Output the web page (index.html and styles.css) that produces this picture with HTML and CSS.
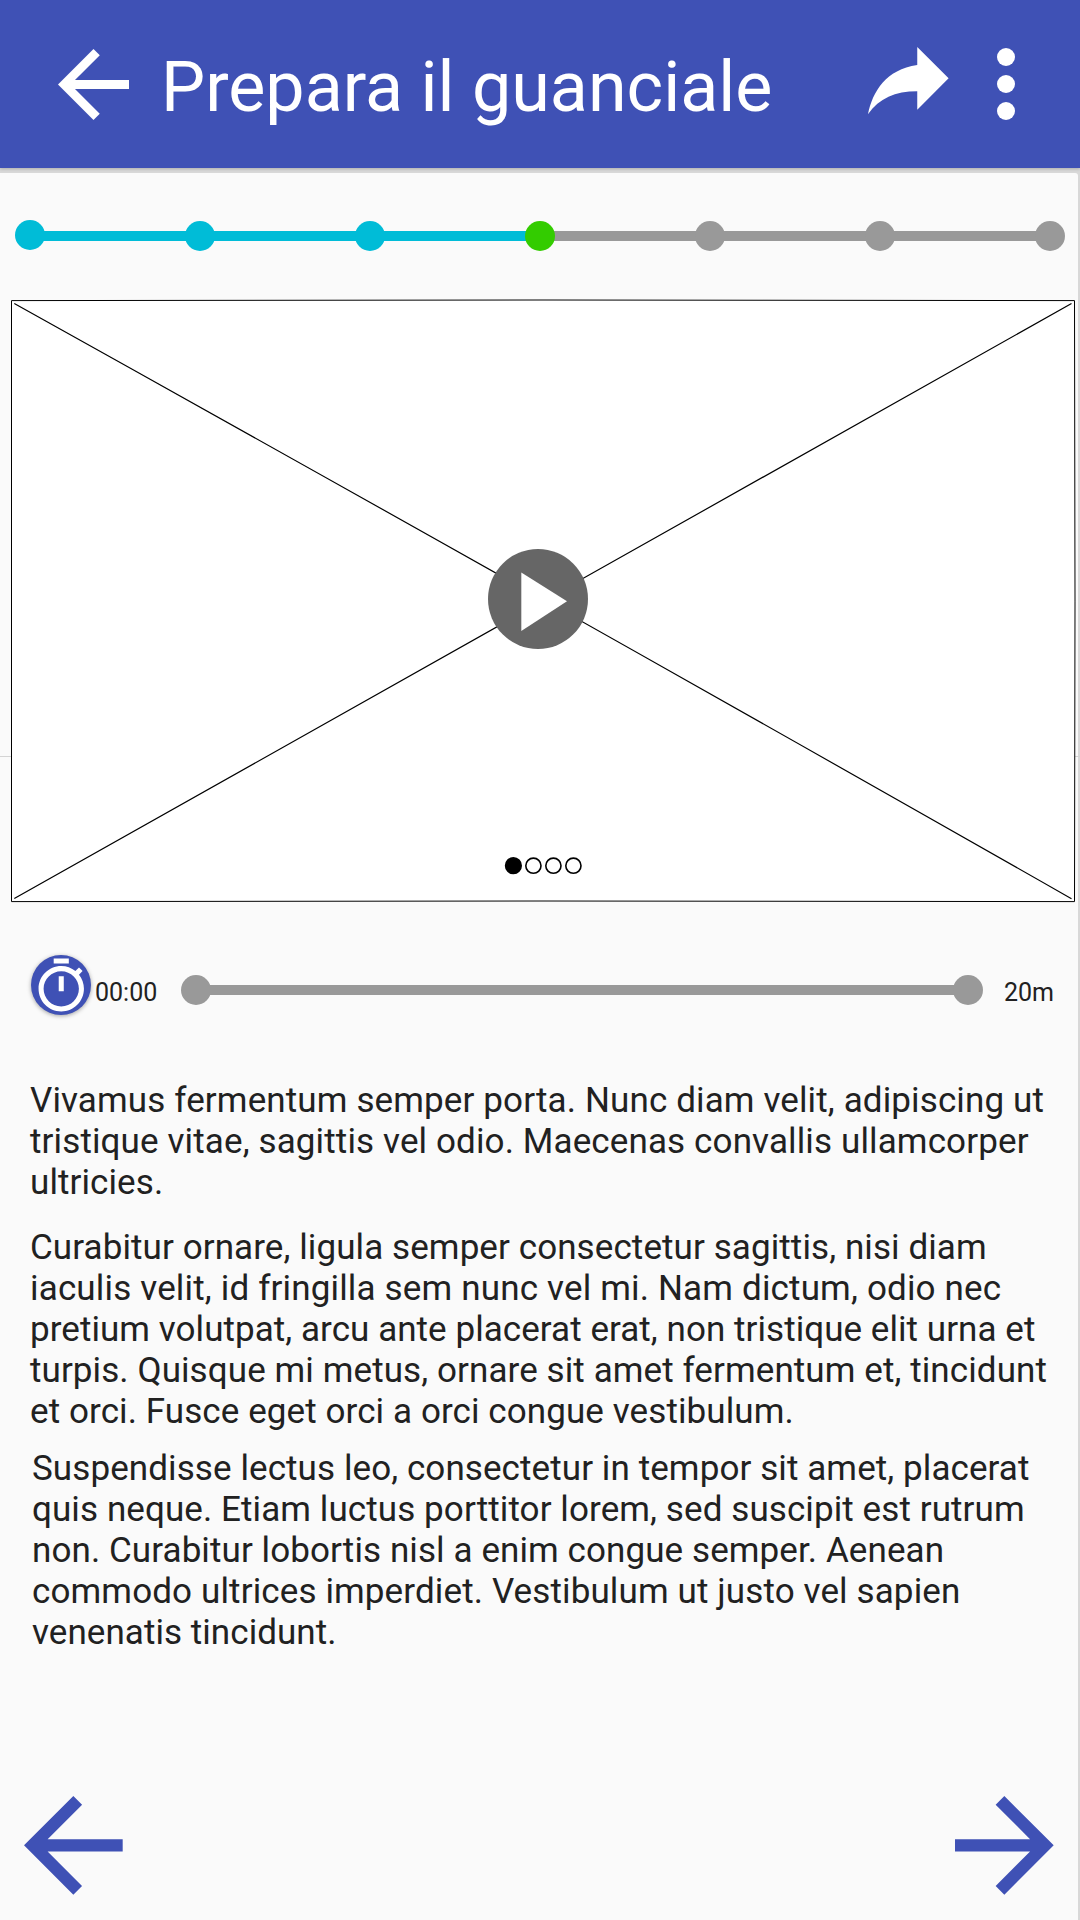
FILE: index.html
```html
<!DOCTYPE html>
<html lang="it">
<head>
<meta charset="utf-8">
<title>Prepara il guanciale</title>
<link rel="stylesheet" href="styles.css">
</head>
<body>
<header class="app-bar">
  <svg class="icon-back" viewBox="4 4 16 16"><path d="M20 11H7.83l5.59-5.59L12 4l-8 8 8 8 1.41-1.41L7.83 13H20v-2z"/></svg>
  <h1 class="title">Prepara il guanciale</h1>
  <svg class="icon-share" viewBox="3 4 18 15"><path d="M21 11l-7-7v4C7 9 4 14 3 19c2.5-3.5 6-5.1 11-5.1V18l7-7z"/></svg>
  <div class="more"><i></i><i></i><i></i></div>
</header>
<main class="page">
  <div class="stepper">
    <i class="dot done first"></i><b class="bar done"></b>
    <i class="dot done"></i><b class="bar done"></b>
    <i class="dot done"></i><b class="bar done"></b>
    <i class="dot current"></i><b class="bar"></b>
    <i class="dot"></i><b class="bar"></b>
    <i class="dot"></i><b class="bar"></b>
    <i class="dot"></i>
  </div>
  <svg class="media" viewBox="0 299 1080 604">
    <path class="divider" d="M0 756.5H1080"/>
    <path class="frame" d="M11.5 300.6Q543 299.4 1074.5 300.6Q1075.5 601 1074.5 901.6Q543 900.4 11.5 901.6Z"/>
    <path class="cross" d="M14.3 303.5Q543 598 1071.5 898.7M14.3 898.5L1071.5 303.5"/>
    <circle class="play" cx="538" cy="599" r="50"/>
    <path class="triangle" d="M521.3 572.4V631L567 601.3Z"/>
    <circle class="page-dot active" cx="513.4" cy="865.7" r="7.8"/>
    <circle class="page-dot" cx="533.4" cy="865.7" r="7.6"/>
    <circle class="page-dot" cx="553.4" cy="865.7" r="7.6"/>
    <circle class="page-dot" cx="573.4" cy="865.7" r="7.6"/>
  </svg>
  <div class="timer">
    <div class="timer-button"><svg viewBox="0 0 24 24"><path d="M15 1H9v2h6V1zm-4 13h2V8h-2v6zm8.03-6.61l1.42-1.42c-.43-.51-.9-.99-1.41-1.41l-1.42 1.42C16.07 4.74 14.12 4 12 4c-4.97 0-9 4.03-9 9s4.02 9 9 9 9-4.03 9-9c0-2.12-.74-4.07-1.97-5.61zM12 20c-3.87 0-7-3.13-7-7s3.13-7 7-7 7 3.13 7 7-3.13 7-7 7z"/></svg></div>
    <span class="elapsed">00:00</span>
    <div class="track"><i class="dot"></i><b class="bar"></b><i class="dot"></i></div>
    <span class="total">20m</span>
  </div>
  <section class="text">
    <p><span class="loose">Vivamus fermentum semper porta. Nunc diam velit, adipiscing ut<br>tristique vitae, sagittis vel odio. Maecenas convallis ullamcorper</span><br>ultricies.</p>
    <p>Curabitur ornare, ligula semper consectetur sagittis, nisi diam<br><span class="looser">iaculis velit, id fringilla sem nunc vel mi. Nam dictum, odio nec</span><br><span class="tight">pretium volutpat, arcu ante placerat erat, non tristique elit urna et</span><br>turpis. Quisque mi metus, ornare sit amet fermentum et, tincidunt<br>et orci. Fusce eget orci a orci congue vestibulum.</p>
    <p class="last">Suspendisse lectus leo, consectetur in tempor sit amet, placerat<br>quis neque. Etiam luctus porttitor lorem, sed suscipit est rutrum<br>non. Curabitur lobortis nisl a enim congue semper. Aenean<br><span class="loose">commodo ultrices imperdiet. Vestibulum ut justo vel sapien</span><br><span class="tight">venenatis tincidunt.</span></p>
  </section>
  <nav class="pager">
    <svg viewBox="4 4 16 16"><path d="M20 11H7.83l5.59-5.59L12 4l-8 8 8 8 1.41-1.41L7.83 13H20v-2z"/></svg>
    <svg viewBox="4 4 16 16"><path d="M12 4l-1.41 1.41L16.17 11H4v2h12.17l-5.58 5.59L12 20l8-8z"/></svg>
  </nav>
</main>
</body>
</html>
```
FILE: styles.css
```css
* { box-sizing: border-box; }
body {
  margin: 0;
  width: 1080px;
  height: 1920px;
  overflow: hidden;
  display: flex;
  flex-direction: column;
  background: #d8d8d8;
  font-family: Roboto, sans-serif;
  color: #212121;
}
svg { display: block; flex: none; }
.app-bar {
  height: 168px;
  flex: none;
  display: flex;
  align-items: flex-start;
  padding: 0 65px 0 58px;
  background: #3f51b5;
  fill: #fff;
  color: #fff;
  box-shadow: 0 1px 3px rgba(0, 0, 0, .2);
}
.icon-back { width: 71px; height: 71px; margin-top: 48.5px; }
.title {
  margin: 46px 0 0 32px;
  font-size: 70px;
  line-height: 82px;
  font-weight: 400;
  white-space: nowrap;
}
.icon-share { width: 80.6px; height: 67.2px; margin: 47.2px 48.5px 0 auto; }
.more { display: flex; flex-direction: column; gap: 9px; padding-top: 48px; }
.more i { width: 18px; height: 18px; border-radius: 50%; background: #fff; }
.page {
  width: 1078px;
  margin-top: 5px;
  flex: 1;
  display: flex;
  flex-direction: column;
  border-radius: 0 3px 0 0;
  background: #fafafa;
}
.stepper { display: flex; align-items: center; padding: 48px 0 0 15px; width: 1065px; }
.dot { width: 30px; height: 30px; flex: none; border-radius: 50%; background: #999; }
.dot.first { margin-top: -2px; }
.bar { height: 10px; flex: 1; margin: 0 -2px; background: #999; }
.done { background: #00bcd7; }
.current { background: #33cc00; z-index: 1; }
.media { width: 1080px; height: 604px; margin-top: 48px; fill: none; stroke: #000; stroke-width: 1; }
.divider { stroke: #d4d4d4; }
.frame { fill: #fff; }
.cross { stroke: #000; stroke-width: 1.2; }
.play { fill: #666; stroke: none; }
.triangle { fill: #fff; stroke: none; }
.page-dot { stroke-width: 1.6; }
.page-dot.active { fill: #000; }
.timer { display: flex; align-items: flex-start; padding: 52px 0 0 31px; height: 177px; font-size: 25px; line-height: 30px; }
.timer-button {
  width: 60px;
  height: 60px;
  border-radius: 50%;
  background: #3f51b5;
  fill: #fff;
  box-shadow: 0 1px 4px rgba(0, 0, 0, .35);
}
.timer-button svg { width: 60.5px; height: 60.5px; margin-top: .6px; }
.elapsed { width: 90px; padding: 23px 0 0 4px; }
.track { width: 802px; display: flex; align-items: center; margin-top: 20px; }
.total { padding: 23px 0 0 21px; }
.text { padding-left: 30px; font-size: 35px; line-height: 41px; letter-spacing: .09px; white-space: nowrap; }
.text p { margin: 0 0 24px; }
.text p.last { margin: -8px 0 0 2px; }
.loose { letter-spacing: .125px; }
.looser { letter-spacing: .165px; }
.tight { letter-spacing: .055px; }
.pager { display: flex; justify-content: space-between; margin: auto 24.5px 25.4px 24px; fill: #3f51b5; }
.pager svg { width: 98.7px; height: 98.7px; }
```
